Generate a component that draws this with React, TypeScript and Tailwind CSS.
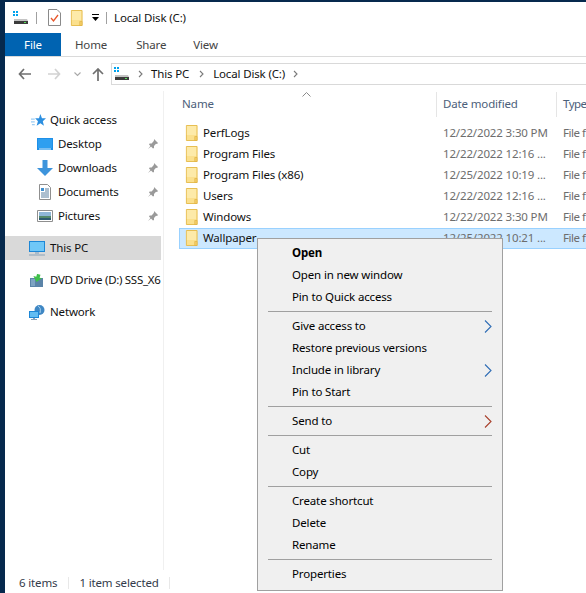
const FolderIcon = ({ className = "w-[13px] h-[17px]" }: { className?: string }) => (
  <svg viewBox="0 0 14 17" className={className} preserveAspectRatio="none">
    <path d="M1.500 1.500h11.500v15H1.500z" fill="#fbe08d" stroke="#e6bc4e" />
    <path d="M2 2h10v9H2z" fill="#fdeaa9" />
    <path d="M10.500 12.500h2.500v4h-2.500z" fill="#f5cf68" stroke="#dcae3e" strokeWidth="0.6" />
  </svg>
);

const DriveIcon = () => (
  <svg viewBox="0 0 16 14" className="w-[16px] h-[14px] shrink-0">
    <path d="M0 0h2v2H0zM3 0h2v2H3zM0 3h2v2H0zM3 3h2v2H3z" fill="#00a2ed" />
    <path d="M1 8h13l1 2H1z" fill="#c4c4c4" />
    <path d="M1 10h14v3H1z" fill="#3c3c3c" />
    <path d="M11 11h2v1h-2z" fill="#56e05a" />
  </svg>
);

const PinIcon = () => (
  <svg viewBox="0 0 12 12" className="w-[12px] h-[12px]">
    <path d="M7 1l4 4-1 1-1-.2L7 8v2l-1 .5L2 6.500l.6-1h2L6.800 3 7 2z" fill="#9a9a9a" />
    <path d="M3.800 7.500L1 11l3.500-2.800z" fill="#9a9a9a" />
  </svg>
);

const StarIcon = () => (
  <svg viewBox="0 0 16 15" className="w-[15px] h-[15px] shrink-0">
    <path d="M10 .5l1.700 4.500 4.300.2-3.400 3 1.200 5-3.800-2.700-4 2.700 1.400-5-3-3 4.100-.2z" fill="#2c8fe0" />
    <path d="M0 6h4M0 9h4M1 12h3" stroke="#7bbcf0" strokeWidth="1" />
  </svg>
);

const DesktopIcon = () => (
  <svg viewBox="0 0 16 12" className="w-[16px] h-[12px]">
    <path d="M0 0h16v12H0z" fill="#1e90e8" />
    <path d="M1 1h14v9H1z" fill="#2f9ff0" />
    <path d="M2 11h12" stroke="#d8eefc" strokeWidth="1" />
  </svg>
);

const DownloadIcon = () => (
  <svg viewBox="0 0 16 16" className="w-[16px] h-[16px]">
    <path d="M5.500 0h5v8H16l-8 8-8-8h5.500z" fill="#3d94dc" />
  </svg>
);

const DocumentIcon = () => (
  <svg viewBox="0 0 12 16" className="w-[12px] h-[16px]">
    <path d="M.5.500h8l3 3v12H.5z" fill="#fff" stroke="#8f8f8f" />
    <path d="M2 4h3v3H2z" fill="#3f8fd0" />
    <path d="M6 5h4M6 7h4M2 9h8M2 11h8M2 13h8" stroke="#5a7f9e" strokeWidth="1" />
  </svg>
);

const PictureIcon = () => (
  <svg viewBox="0 0 16 12" className="w-[16px] h-[12px]">
    <path d="M.5.500h15v11H.5z" fill="#fff" stroke="#8f8f8f" />
    <path d="M2 2h12v4H2z" fill="#8fb6d6" />
    <path d="M2 6h12v2H2z" fill="#54896a" />
    <path d="M2 8h12v2H2z" fill="#2f5a70" />
  </svg>
);

const MonitorIcon = () => (
  <svg viewBox="0 0 16 15" className="w-[16px] h-[15px] shrink-0">
    <path d="M0 0h16v11H0z" fill="#1d87d6" />
    <path d="M1 1h14v9H1z" fill="#6fc7f7" />
    <path d="M6 11h4v2H6z" fill="#a9bccb" />
    <path d="M0 14h16" stroke="#8ba3b8" strokeWidth="1" />
  </svg>
);

const DvdIcon = () => (
  <svg viewBox="0 0 13 13" className="w-[13px] h-[13px] shrink-0">
    <path d="M0 4h13v9H0z" fill="#5b84a8" />
    <path d="M1 5h4v7H1z" fill="#7da3c2" />
    <path d="M6 0h3.500v3H12L7.500 8 3 3h3z" fill="#3fbf4a" transform="rotate(15 7 4)" />
  </svg>
);

const NetworkIcon = () => (
  <svg viewBox="0 0 16 15" className="w-[16px] h-[15px] shrink-0">
    <circle cx="10.500" cy="5" r="5" fill="#3f87c4" />
    <path d="M9 1c2 1 3 3 2 7" stroke="#a9d3ee" strokeWidth="1" fill="none" />
    <path d="M0 6h10v7H0z" fill="#1d87d6" />
    <path d="M1 7h8v5H1z" fill="#63bdf2" />
    <path d="M4 13h2v1H4zM2 14h6v1H2z" fill="#8ba3b8" />
  </svg>
);

const ChecklistIcon = () => (
  <svg viewBox="0 0 13 17" className="w-[13px] h-[17px] shrink-0">
    <path d="M.5.500h8.500l3.500 3.500v12.500H.5z" fill="#fff" stroke="#8a8a8a" />
    <path d="M3 9l2.500 3L10 6" stroke="#e8562a" strokeWidth="1.300" fill="none" />
  </svg>
);

const NavArrow = ({ color, flip }: { color: string; flip?: boolean }) => (
  <svg viewBox="0 0 13 12" className={flip ? "w-[13px] h-[12px] rotate-180" : "w-[13px] h-[12px]"}>
    <path d="M6 1L1.500 6 6 11M2 6h11" stroke={color} strokeWidth="1.700" fill="none" />
  </svg>
);

const Crumb = () => (
  <svg viewBox="0 0 5 8" className="w-[5px] h-[8px]">
    <path d="M1 1l3 3-3 3" stroke="#7a7a7a" strokeWidth="1.100" fill="none" />
  </svg>
);

const pinned = [
  { label: "Desktop", icon: <DesktopIcon /> },
  { label: "Downloads", icon: <DownloadIcon /> },
  { label: "Documents", icon: <DocumentIcon /> },
  { label: "Pictures", icon: <PictureIcon /> },
];

const files = [
  { name: "PerfLogs", date: "12/22/2022 3:30 PM" },
  { name: "Program Files", date: "12/22/2022 12:16 ..." },
  { name: "Program Files (x86)", date: "12/25/2022 10:19 ..." },
  { name: "Users", date: "12/22/2022 12:16 ..." },
  { name: "Windows", date: "12/22/2022 3:30 PM" },
];

type MenuEntry = { label: string; bold?: boolean; arrow?: "blue" | "red" } | "sep";

const menu: MenuEntry[] = [
  { label: "Open", bold: true },
  { label: "Open in new window" },
  { label: "Pin to Quick access" },
  "sep",
  { label: "Give access to", arrow: "blue" },
  { label: "Restore previous versions" },
  { label: "Include in library", arrow: "blue" },
  { label: "Pin to Start" },
  "sep",
  { label: "Send to", arrow: "red" },
  "sep",
  { label: "Cut" },
  { label: "Copy" },
  "sep",
  { label: "Create shortcut" },
  { label: "Delete" },
  { label: "Rename" },
  "sep",
  { label: "Properties" },
];

function ContextMenu() {
  return (
    <div className="absolute left-[257px] top-[238px] w-[246px] h-[353px] bg-[#f0f0f0] border border-[#a0a0a0] pt-[3px] pb-[2px] px-[2px] text-[#000]">
      {menu.map((item, i) =>
        item === "sep" ? (
          <div key={i} className="h-[7px] pt-[3px] px-[8px]">
            <div className="h-px bg-[#a0a0a0]" />
          </div>
        ) : (
          <div key={i} className="h-[22px] flex items-center pl-[32px] pr-[8px] justify-between">
            <span className={item.bold ? "font-bold" : ""}>{item.label}</span>
            {item.arrow && (
              <svg viewBox="0 0 8 13" className="w-[8px] h-[13px]">
                <path d="M1 .5L7 6.500 1 12.500" stroke={item.arrow === "blue" ? "#2f6db5" : "#a8402c"} strokeWidth="1.100" fill="none" />
              </svg>
            )}
          </div>
        )
      )}
    </div>
  );
}

export default function App() {
  return (
    <div className="relative w-[586px] h-[593px] overflow-hidden bg-[#06294d] pl-[5px] pt-[2px] text-[11.5px] leading-[16px] tracking-[-0.15px] text-[#000] font-['Noto_Sans',sans-serif]">
      <div className="w-full h-full bg-white flex flex-col">
        {/* title bar */}
        <div className="h-[31px] flex items-center pl-[8px] shrink-0">
          <DriveIcon />
          <div className="w-px h-[12px] bg-[#a0a0a0] ml-[7px] mr-[11px]" />
          <ChecklistIcon />
          <div className="ml-[9px] flex"><FolderIcon /></div>
          <svg viewBox="0 0 7 7" className="w-[7px] h-[7px] ml-[9px]">
            <path d="M0 .5h7" stroke="#000" strokeWidth="1" />
            <path d="M0 3h7L3.500 7z" fill="#000" />
          </svg>
          <div className="w-px h-[12px] bg-[#a0a0a0] ml-[7px] mr-[7px]" />
          <span className="text-[#111]">Local Disk (C:)</span>
        </div>

        {/* ribbon tabs */}
        <div className="h-[24px] flex shrink-0 border-b border-[#dadada] text-[#444]">
          <div className="w-[56px] h-[23px] bg-[#0063b1] text-white flex items-center justify-center">File</div>
          <div className="ml-[14px] h-[23px] flex items-center">Home</div>
          <div className="ml-[29px] h-[23px] flex items-center">Share</div>
          <div className="ml-[27px] h-[23px] flex items-center">View</div>
        </div>

        {/* nav and address bar */}
        <div className="h-[34px] flex items-center shrink-0">
          <div className="ml-[13px] flex"><NavArrow color="#6f6f6f" /></div>
          <div className="ml-[17px] flex"><NavArrow color="#d2d2d2" flip /></div>
          <svg viewBox="0 0 7 5" className="w-[7px] h-[5px] ml-[13px]">
            <path d="M.5.500L3.500 3.500 6.500.500" stroke="#a8a8a8" strokeWidth="1.100" fill="none" />
          </svg>
          <svg viewBox="0 0 12 13" className="w-[12px] h-[13px] ml-[11px]">
            <path d="M1 6l5-5 5 5M6 1.500V13" stroke="#6f6f6f" strokeWidth="1.700" fill="none" />
          </svg>
          <div className="ml-[7px] flex-1 h-[22px] border border-[#d9d9d9] border-r-0 flex items-center pl-[2px] text-[#111]">
            <DriveIcon />
            <div className="ml-[8px] flex"><Crumb /></div>
            <span className="ml-[8px]">This PC</span>
            <div className="ml-[10px] flex"><Crumb /></div>
            <span className="ml-[9px]">Local Disk (C:)</span>
            <div className="ml-[8px] flex"><Crumb /></div>
          </div>
        </div>

        {/* panes */}
        <div className="flex-1 flex min-h-0">
          <div className="w-[159px] shrink-0 border-r border-[#f0f0f0] pt-[17px]">
            <div className="h-[24px] flex items-center pl-[26px] text-[#111]">
              <StarIcon />
              <span className="ml-[4px]">Quick access</span>
            </div>
            {pinned.map((p) => (
              <div key={p.label} className="h-[24px] flex items-center text-[#111]">
                <div className="w-[16px] ml-[32px] flex justify-center">{p.icon}</div>
                <span className="ml-[5px] flex-1">{p.label}</span>
                <div className="mr-[4px] flex"><PinIcon /></div>
              </div>
            ))}
            <div className="h-[24px] mt-[8px] flex items-center bg-[#d9d9d9] w-[156px] pl-[24px] text-[#111]">
              <MonitorIcon />
              <span className="ml-[5px]">This PC</span>
            </div>
            <div className="h-[24px] mt-[8px] flex items-center pl-[25px] w-[156px] whitespace-nowrap text-[#111]">
              <DvdIcon />
              <span className="ml-[7px] tracking-[-0.3px]">DVD Drive (D:) SSS_X6</span>
            </div>
            <div className="h-[24px] mt-[8px] flex items-center pl-[24px] text-[#111]">
              <NetworkIcon />
              <span className="ml-[5px]">Network</span>
            </div>
          </div>

          <div className="flex-1 min-w-0 overflow-hidden">
            {/* column headers */}
            <div className="h-[25px] mt-[1px] flex text-[#4c607a] relative">
              <div className="w-[273px] shrink-0 pl-[18px] pb-[2px] flex items-center border-r border-[#e5e5e5]">Name</div>
              <div className="w-[120px] shrink-0 pl-[6px] pb-[2px] flex items-center border-r border-[#e5e5e5] whitespace-nowrap">Date modified</div>
              <div className="pl-[6px] pb-[2px] shrink-0 flex items-center tracking-[-0.5px]">Type</div>
              <svg viewBox="0 0 9 5" className="absolute left-[138px] top-0 w-[9px] h-[5px]">
                <path d="M.5 4.500L4.500.500l4 4" stroke="#8a8a8a" strokeWidth="1" fill="none" />
              </svg>
            </div>
            <div className="pt-[6px] pl-[15px]">
              {files.map((f) => (
                <div key={f.name} className="h-[21px] pb-[2px] flex items-center whitespace-nowrap border border-transparent">
                  <div className="ml-[5px] flex shrink-0"><FolderIcon /></div>
                  <span className="ml-[5px] w-[240px] shrink-0 text-[#111]">{f.name}</span>
                  <span className="w-[120px] shrink-0 text-[#6d6d6d]">{f.date}</span>
                  <span className="shrink-0 text-[#6d6d6d] tracking-[-0.5px]">File f</span>
                </div>
              ))}
              <div className="h-[21px] pb-[2px] flex items-center whitespace-nowrap bg-[#cce8ff] border border-[#99d1ff] border-r-0">
                <div className="ml-[5px] flex shrink-0"><FolderIcon /></div>
                <span className="ml-[5px] w-[240px] shrink-0 text-[#111]">Wallpaper</span>
                <span className="w-[120px] shrink-0 text-[#6d6d6d]">12/25/2022 10:21 ...</span>
                <span className="shrink-0 text-[#6d6d6d] tracking-[-0.5px]">File f</span>
              </div>
            </div>
          </div>
        </div>

        {/* status bar */}
        <div className="h-[23px] shrink-0 flex items-start pt-[5px] text-[#333a4a]">
          <span className="ml-[14px]">6 items</span>
          <div className="w-px h-[12px] bg-[#e8e8e8] ml-[11px] mt-[2px]" />
          <span className="ml-[10px]">1 item selected</span>
          <div className="w-px h-[12px] bg-[#e8e8e8] ml-[10px] mt-[2px]" />
        </div>
      </div>
      <ContextMenu />
    </div>
  );
}
